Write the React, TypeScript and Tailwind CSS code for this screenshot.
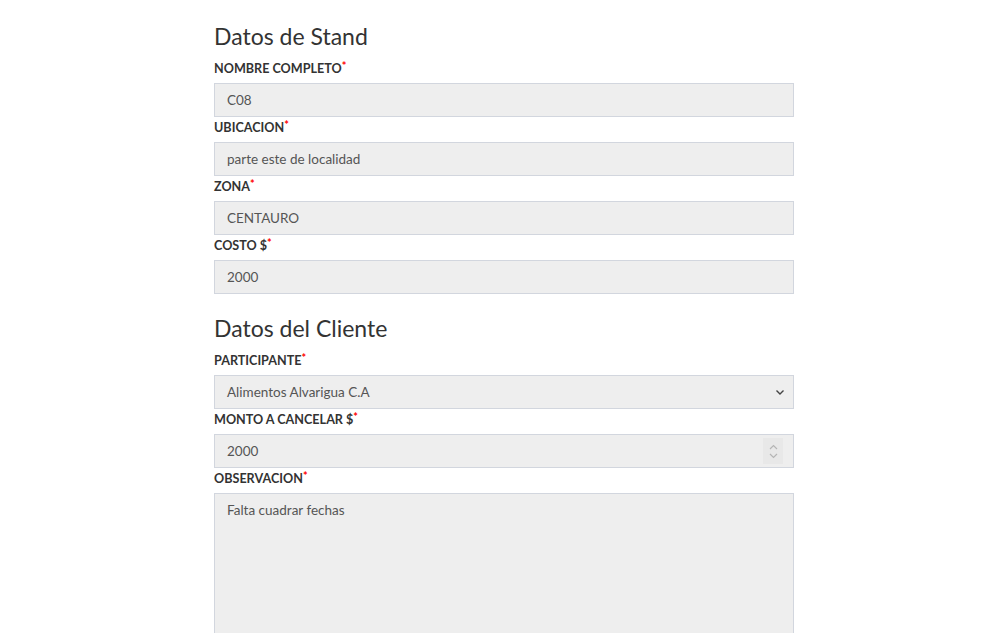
import React from 'react';

const font = { fontFamily: 'Lato, "Open Sans", sans-serif' };

function Label({ text }: { text: string }) {
  return (
    <label className="block h-[21px] mb-[4px] text-[12.6px] leading-[21px] font-bold text-[#333333] uppercase">
      {text}
      <span className="text-[#ff0000] align-top text-[11px] leading-[15px]">*</span>
    </label>
  );
}

const inputClass =
  'block w-full h-[34px] px-3 bg-[#eeeeee] border border-[#d2d6de] text-[13.5px] text-[#555555] outline-none';

function TextField({ label, value }: { label: string; value: string }) {
  return (
    <div>
      <Label text={label} />
      <input className={inputClass} style={font} value={value} readOnly />
    </div>
  );
}

export default function App() {
  return (
    <div className="min-h-screen bg-white" style={font}>
      <div className="w-[580px] ml-[214px] pt-[21px]">
        <h3 className="text-[23px] leading-[30px] font-normal text-[#333333] mb-[7px]">Datos de Stand</h3>
        <TextField label="Nombre completo" value="C08" />
        <TextField label="Ubicacion" value="parte este de localidad" />
        <TextField label="Zona" value="CENTAURO" />
        <TextField label="Costo $" value="2000" />

        <h3 className="mt-[19px] text-[23px] leading-[30px] font-normal text-[#333333] mb-[7px]">
          Datos del Cliente
        </h3>
        <div>
          <Label text="Participante" />
          <div className={`${inputClass} flex items-center justify-between pr-[8px]`}>
            <span>Alimentos Alvarigua C.A</span>
            <svg width="10" height="10" viewBox="0 0 10 10" fill="none" stroke="#444" strokeWidth="1.4">
              <path d="M1.5 3.5 L5 7 L8.5 3.5" />
            </svg>
          </div>
        </div>
        <div>
          <Label text="Monto a cancelar $" />
          <div className={`${inputClass} flex items-center justify-between pr-[10px]`}>
            <span>2000</span>
            <div className="w-[20px] h-[26px] bg-[#e8e8e8] flex flex-col items-center justify-center gap-[3px]">
              <svg width="9" height="6" viewBox="0 0 9 6" fill="none" stroke="#b5b5b5" strokeWidth="1.2">
                <path d="M1 5 L4.5 1.5 L8 5" />
              </svg>
              <svg width="9" height="6" viewBox="0 0 9 6" fill="none" stroke="#b5b5b5" strokeWidth="1.2">
                <path d="M1 1 L4.5 4.5 L8 1" />
              </svg>
            </div>
          </div>
        </div>
        <div>
          <Label text="Observacion" />
          <textarea
            className="block w-full h-[160px] px-3 py-[6px] bg-[#eeeeee] border border-[#d2d6de] text-[13.5px] text-[#555555] outline-none resize-none"
            style={font}
            value="Falta cuadrar fechas"
            readOnly
          />
        </div>
      </div>
    </div>
  );
}
